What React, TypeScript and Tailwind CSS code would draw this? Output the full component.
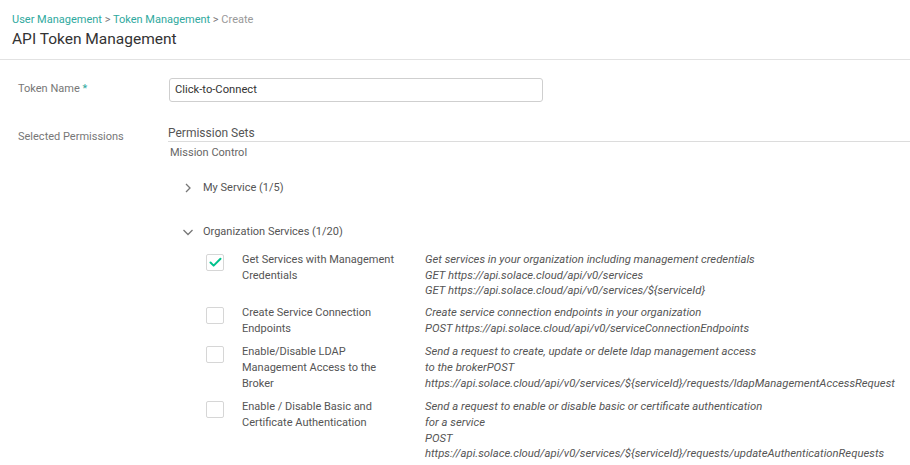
import { Check } from "lucide-react"

type Permission = {
  name: string[]
  desc: string[]
  checked?: boolean
  gap: string
}

const permissions: Permission[] = [
  {
    name: ["Get Services with Management", "Credentials"],
    desc: [
      "Get services in your organization including management credentials",
      "GET https://api.solace.cloud/api/v0/services",
      "GET https://api.solace.cloud/api/v0/services/${serviceId}",
    ],
    checked: true,
    gap: "mb-[6px]",
  },
  {
    name: ["Create Service Connection", "Endpoints"],
    desc: [
      "Create service connection endpoints in your organization",
      "POST https://api.solace.cloud/api/v0/serviceConnectionEndpoints",
    ],
    gap: "mb-[7px]",
  },
  {
    name: ["Enable/Disable LDAP", "Management Access to the", "Broker"],
    desc: [
      "Send a request to create, update or delete ldap management access",
      "to the brokerPOST",
      "https://api.solace.cloud/api/v0/services/${serviceId}/requests/ldapManagementAccessRequest",
    ],
    gap: "mb-[7px]",
  },
  {
    name: ["Enable / Disable Basic and", "Certificate Authentication"],
    desc: [
      "Send a request to enable or disable basic or certificate authentication",
      "for a service",
      "POST",
      "https://api.solace.cloud/api/v0/services/${serviceId}/requests/updateAuthenticationRequests",
    ],
    gap: "mb-0",
  },
]

function ChevronRightIcon() {
  return (
    <svg width="10" height="10" viewBox="0 0 10 10" fill="none" stroke="#777" strokeWidth="1.3">
      <polyline points="3,1 7,5 3,9" />
    </svg>
  )
}

function ChevronDownIcon() {
  return (
    <svg width="10" height="10" viewBox="0 0 10 10" fill="none" stroke="#777" strokeWidth="1.3">
      <polyline points="0.5,3 5,7.5 9.5,3" />
    </svg>
  )
}

function PermissionRow({ p }: { p: Permission }) {
  return (
    <div className={`flex ${p.gap}`}>
      <div className="w-[74px] pl-[38px] pt-[2px] shrink-0">
        <div className="w-[18px] h-[17px] border border-[#d6d6d6] rounded-[2px] flex items-center justify-center bg-white">
          {p.checked && <Check size={15} strokeWidth={3.2} className="text-[#00c28c]" />}
        </div>
      </div>
      <div className="w-[183px] shrink-0 text-[11px] leading-4 text-[#555]">
        {p.name.map((l) => (
          <div key={l} className="whitespace-nowrap">{l}</div>
        ))}
      </div>
      <div className="text-[11.3px] leading-[15.7px] text-[#555] italic">
        {p.desc.map((l) => (
          <div key={l} className="whitespace-nowrap">{l}</div>
        ))}
      </div>
    </div>
  )
}

export default function App() {
  return (
    <div className="w-[910px] h-[465px] overflow-hidden bg-white font-['Roboto',sans-serif]">
      {/* Header */}
      <div className="px-3 pt-[12px] pb-[9px] border-b border-[#e2e2e2]">
        <div className="text-[11px] leading-4 whitespace-nowrap">
          <span className="text-[#2fa99e]">User Management</span>
          <span className="text-[#777]"> &gt; </span>
          <span className="text-[#2fa99e]">Token Management</span>
          <span className="text-[#777]"> &gt; </span>
          <span className="text-[#999]"> Create</span>
        </div>
        <h1 className="text-[15.5px] leading-[22px] text-[#333]">API Token Management</h1>
      </div>

      {/* Form */}
      <div className="pl-[18px]">
        <div className="mt-[18px] grid grid-cols-[150px_1fr]">
          <div className="pt-[3px] text-[11px] leading-4 text-[#777]">
            Token Name <span className="text-[#2fa99e]">*</span>
          </div>
          <div className="pl-[1px]">
            <div className="w-[374px] h-[24px] border border-[#cfcfcf] rounded-[3px] px-[5px] flex items-center text-[11.2px] text-[#333]">
              Click-to-Connect
            </div>
          </div>
        </div>

        <div className="mt-[23px] grid grid-cols-[150px_1fr]">
          <div className="pt-[4px] text-[11px] leading-4 text-[#777]">Selected Permissions</div>
          <div>
            <div className="pt-[1px] text-[12px] leading-[15px] text-[#555] border-b border-[#dcdcdc]">Permission Sets</div>
            <div className="mt-[3px] pl-[2px] text-[11px] leading-4 text-[#666]">Mission Control</div>

            <div className="mt-[19px] pl-[15px] flex items-center gap-[10px] text-[11px] leading-4 text-[#555]">
              <ChevronRightIcon />
              <span>My Service (1/5)</span>
            </div>

            <div className="mt-[28px] pl-[15px] flex items-center gap-[10px] text-[11px] leading-4 text-[#555]">
              <ChevronDownIcon />
              <span>Organization Services (1/20)</span>
            </div>

            <div className="mt-[12px] flex flex-col">
              {permissions.map((p) => (
                <PermissionRow key={p.name[0]} p={p} />
              ))}
            </div>
          </div>
        </div>
      </div>
    </div>
  )
}
